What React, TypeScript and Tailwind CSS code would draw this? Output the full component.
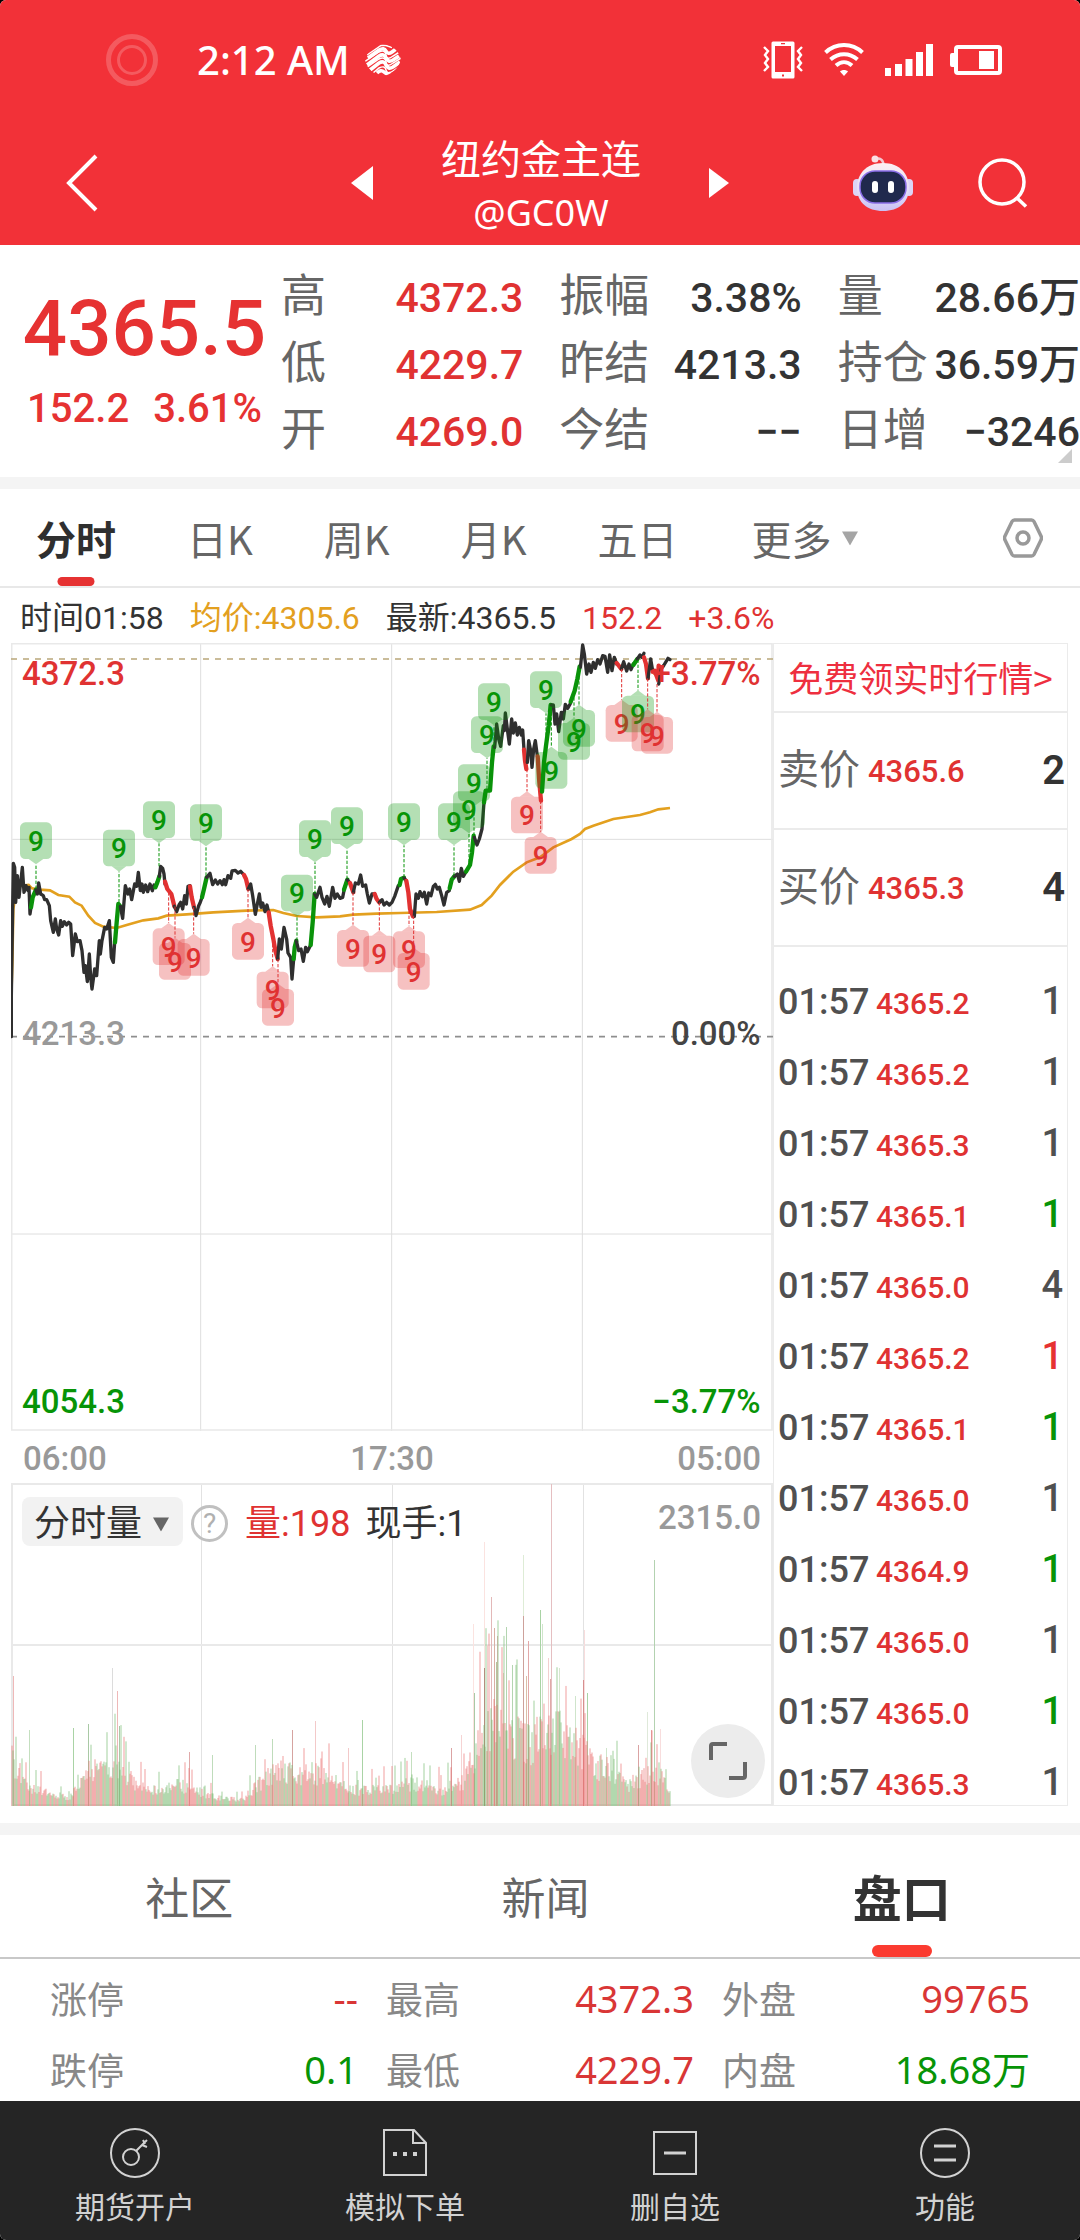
import type { ReactNode } from 'react';

const NUM = "font-['Roboto','Noto_Sans_CJK_SC',sans-serif]";

type Pt = [number, number];
type Run = { color: 'k' | 'g' | 'r'; pts: Pt[] };

const STROKE = { k: '#2f2f2f', g: '#0a930a', r: '#e23232' };

/* Intraday price, split in runs wherever a nine-count sequence is highlighted */
const PRICE: Run[] = [
  { color: 'k', pts: [[34, 1223], [34, 1100], [37, 900], [40, 703], [44, 715], [47, 820], [52, 740], [57, 805], [62, 760], [67, 715], [72, 790], [78, 770], [84, 785], [87, 775], [90, 855], [93, 835]] },
  { color: 'g', pts: [[93, 835], [98, 805], [108, 782]] },
  { color: 'k', pts: [[108, 782], [112, 795], [116, 762], [122, 795], [130, 800], [134, 812], [140, 812], [148, 830], [152, 875], [160, 910], [166, 870], [170, 900], [176, 918], [182, 875], [187, 892], [193, 878], [200, 888], [206, 880], [212, 885], [218, 980], [226, 915], [232, 938], [240, 935], [246, 965], [252, 1030], [256, 1010], [262, 1058], [268, 975], [272, 1045], [276, 1080], [284, 1020], [290, 1040], [298, 935], [301, 975], [306, 935], [314, 895], [320, 900], [328, 875], [334, 985], [340, 1000], [344, 940]] },
  { color: 'g', pts: [[345, 940], [350, 880], [355, 825], [361, 832]] },
  { color: 'k', pts: [[361, 832], [368, 868], [376, 770], [384, 795], [389, 780], [395, 812], [404, 765], [410, 772], [415, 730], [421, 785], [426, 765], [430, 790], [437, 768], [443, 788], [450, 765], [457, 785], [462, 768], [466, 775]] },
  { color: 'g', pts: [[466, 775], [472, 760], [478, 742]] },
  { color: 'k', pts: [[478, 742], [482, 712], [488, 718], [492, 735], [495, 765]] },
  { color: 'r', pts: [[495, 758], [502, 780], [514, 795], [523, 832]] },
  { color: 'k', pts: [[523, 832], [530, 848], [537, 828], [542, 820], [548, 840], [554, 800], [559, 825], [564, 772], [570, 770]] },
  { color: 'r', pts: [[570, 772], [575, 805], [582, 835]] },
  { color: 'k', pts: [[582, 835], [588, 860], [596, 830], [600, 822], [606, 805]] },
  { color: 'g', pts: [[606, 805], [612, 780], [620, 745]] },
  { color: 'k', pts: [[620, 745], [630, 733], [638, 767], [646, 753], [653, 765], [660, 755], [667, 767], [672, 752], [677, 767], [684, 740], [692, 748], [696, 726], [706, 724], [714, 732], [722, 727], [732, 738]] },
  { color: 'r', pts: [[732, 738], [738, 750], [745, 780]] },
  { color: 'k', pts: [[745, 780], [752, 765], [758, 800], [766, 856], [772, 825], [778, 795], [783, 835], [788, 822], [795, 848], [801, 828], [806, 850]] },
  { color: 'r', pts: [[806, 850], [812, 890], [820, 930], [826, 965], [833, 990]] },
  { color: 'k', pts: [[833, 990], [838, 930], [844, 960], [852, 895], [860, 930], [864, 972], [872, 985], [876, 1050], [881, 990]] },
  { color: 'g', pts: [[881, 990], [884, 955], [889, 935]] },
  { color: 'k', pts: [[889, 935], [896, 965], [903, 960], [910, 997], [917, 955], [922, 968], [932, 948]] },
  { color: 'g', pts: [[932, 948], [938, 880], [944, 795]] },
  { color: 'k', pts: [[944, 795], [950, 805], [960, 775], [966, 805], [974, 825], [981, 802], [988, 832], [998, 775], [1005, 808], [1012, 795], [1020, 808], [1028, 805], [1032, 785]] },
  { color: 'g', pts: [[1032, 782], [1042, 752]] },
  { color: 'k', pts: [[1042, 752], [1050, 762]] },
  { color: 'r', pts: [[1050, 762], [1060, 790]] },
  { color: 'k', pts: [[1060, 790], [1066, 762], [1075, 765], [1082, 738], [1088, 772], [1097, 768], [1102, 795], [1108, 822], [1116, 795], [1124, 795]] },
  { color: 'r', pts: [[1124, 795], [1130, 810], [1138, 820]] },
  { color: 'k', pts: [[1138, 820], [1146, 812], [1152, 828], [1160, 820], [1168, 828], [1176, 820], [1184, 802], [1195, 770]] },
  { color: 'g', pts: [[1199, 768], [1203, 750], [1212, 746]] },
  { color: 'k', pts: [[1212, 746], [1219, 756]] },
  { color: 'r', pts: [[1219, 756], [1225, 790], [1230, 840], [1239, 862]] },
  { color: 'k', pts: [[1243, 862], [1248, 795], [1255, 808], [1260, 788], [1267, 803], [1273, 790], [1280, 825], [1286, 792], [1293, 800], [1300, 772], [1306, 766], [1312, 780], [1318, 775], [1325, 800], [1332, 828], [1340, 790], [1348, 785]] },
  { color: 'g', pts: [[1349, 778], [1355, 752], [1363, 742]] },
  { color: 'k', pts: [[1363, 742], [1372, 735], [1378, 757], [1384, 718], [1390, 742], [1398, 728]] },
  { color: 'g', pts: [[1398, 728], [1410, 708], [1416, 670], [1421, 620]] },
  { color: 'k', pts: [[1423, 625], [1431, 648], [1438, 630], [1446, 600], [1452, 520]] },
  { color: 'g', pts: [[1452, 520], [1457, 485], [1470, 485], [1476, 400], [1481, 352]] },
  { color: 'k', pts: [[1484, 355], [1490, 285], [1496, 330], [1502, 352], [1510, 290], [1513, 305], [1516, 252], [1522, 300], [1528, 345], [1535, 270], [1540, 312], [1546, 282], [1552, 318], [1558, 295], [1564, 318], [1568, 303], [1572, 362]] },
  { color: 'r', pts: [[1572, 362], [1575, 395], [1579, 420]] },
  { color: 'k', pts: [[1582, 400], [1586, 335], [1592, 365], [1596, 415], [1601, 360], [1606, 335], [1612, 382]] },
  { color: 'r', pts: [[1613, 382], [1618, 460], [1623, 515]] },
  { color: 'g', pts: [[1626, 488], [1632, 400], [1638, 350], [1646, 290], [1652, 228]] },
  { color: 'k', pts: [[1654, 228], [1660, 228], [1665, 285], [1670, 255], [1676, 308], [1684, 250], [1690, 270], [1696, 226], [1703, 238], [1712, 222]] },
  { color: 'g', pts: [[1712, 218], [1724, 185], [1732, 150], [1739, 112]] },
  { color: 'k', pts: [[1741, 115], [1745, 80], [1748, 48], [1753, 75], [1760, 135], [1767, 105], [1773, 130], [1780, 100], [1786, 118], [1793, 92], [1800, 105], [1808, 80], [1815, 82], [1823, 130], [1829, 78], [1836, 125], [1843, 85], [1850, 105]] },
  { color: 'r', pts: [[1850, 102], [1864, 120]] },
  { color: 'k', pts: [[1864, 120], [1871, 98], [1880, 126], [1887, 105], [1893, 122], [1900, 105]] },
  { color: 'g', pts: [[1900, 108], [1912, 90]] },
  { color: 'k', pts: [[1912, 90], [1920, 78], [1926, 85], [1932, 73]] },
  { color: 'r', pts: [[1932, 85], [1938, 105], [1944, 148]] },
  { color: 'k', pts: [[1944, 148], [1952, 90], [1958, 125]] },
  { color: 'r', pts: [[1958, 128], [1964, 125], [1974, 152], [1976, 110]] },
  { color: 'k', pts: [[1976, 165], [1984, 120], [1992, 108], [2004, 88], [2010, 92]] },
];

const AVERAGE =
  '34,1100 37,1000 40,840 50,772 86,768 96,778 120,782 150,784 175,798 208,803 225,820 245,830 265,860 285,882 310,893 350,897 380,888 430,874 475,868 500,860 560,856 640,850 740,845 820,843 850,852 890,861 950,865 1020,862 1060,857 1130,854 1200,852 1310,849 1410,842 1445,828 1475,800 1500,768 1540,728 1580,700 1620,685 1660,655 1715,630 1740,615 1755,600 1780,590 1840,570 1920,558 1950,550 1975,541 2010,537';

/* up: the box hangs below the line and its tip points upward */
type Nine = { x: number; top: number; to: number; up?: boolean; red?: boolean };

const NINES: Nine[] = [
  { x: 108, top: 580, to: 780 },
  { x: 357, top: 602, to: 820 },
  { x: 477, top: 517, to: 712 },
  { x: 618, top: 526, to: 740 },
  { x: 891, top: 737, to: 935 },
  { x: 945, top: 574, to: 795 },
  { x: 1041, top: 535, to: 750 },
  { x: 1212, top: 523, to: 745 },
  { x: 1362, top: 523, to: 740 },
  { x: 1407, top: 487, to: 700 },
  { x: 1422, top: 406, to: 620 },
  { x: 1461, top: 262, to: 480 },
  { x: 1482, top: 163, to: 350 },
  { x: 1638, top: 127, to: 350 },
  { x: 1654, top: 369, to: 235, up: true },
  { x: 1737, top: 243, to: 112, up: true },
  { x: 1722, top: 282, to: 190, up: true },
  { x: 506, top: 898, to: 790, up: true, red: true },
  { x: 525, top: 942, to: 832, up: true, red: true },
  { x: 581, top: 930, to: 835, up: true, red: true },
  { x: 744, top: 882, to: 780, up: true, red: true },
  { x: 818, top: 1028, to: 930, up: true, red: true },
  { x: 834, top: 1080, to: 990, up: true, red: true },
  { x: 1059, top: 903, to: 790, up: true, red: true },
  { x: 1138, top: 920, to: 820, up: true, red: true },
  { x: 1227, top: 907, to: 800, up: true, red: true },
  { x: 1241, top: 972, to: 860, up: true, red: true },
  { x: 1581, top: 503, to: 420, up: true, red: true },
  { x: 1622, top: 624, to: 515, up: true, red: true },
  { x: 1865, top: 228, to: 120, up: true, red: true },
  { x: 1914, top: 200, to: 92, up: true },
  { x: 1943, top: 257, to: 148, up: true, red: true },
  { x: 1971, top: 264, to: 150, up: true, red: true },
];

function NineTag({ x, top, to, up, red }: Nine) {
  const color = red ? '#e03232' : '#079407';
  const edge = up ? top - 16 : top + 126;
  return (
    <g>
      <line x1={x} x2={x} y1={to} y2={edge} stroke={color} strokeWidth="3" strokeDasharray="10 5" />
      <g fill={color} fillOpacity="0.3">
        <rect x={x - 48} y={top} width="96" height="110" rx="16" />
        {up ? (
          <path d={`M${x - 22} ${top}L${x} ${top - 16}L${x + 22} ${top}z`} />
        ) : (
          <path d={`M${x - 22} ${top + 110}L${x} ${top + 126}L${x + 22} ${top + 110}z`} />
        )}
      </g>
      <text x={x} y={top + 86} textAnchor="middle" fontSize="84" fill={color}>9</text>
    </g>
  );
}

function PriceChart() {
  return (
    <svg viewBox="33 42 2286 2364" className={`block w-full font-medium ${NUM}`} role="img" aria-label="分时">
      <g fill="none" stroke="#dedede" strokeWidth="3">
        <path d="M33 631H2319M33 1815H2319M602 42V2406M1175 42V2406M1747 42V2406" />
        <path d="M35 44H2316V2403H35z" stroke="#e9e9e9" strokeWidth="5" />
      </g>
      <line x1="33" x2="2319" y1="90" y2="90" stroke="#b9a679" strokeWidth="5" strokeDasharray="18 18" />
      <line x1="33" x2="2319" y1="1223" y2="1223" stroke="#8e8e8e" strokeWidth="5" strokeDasharray="18 18" />
      <polyline points={AVERAGE} fill="none" stroke="#e3a01f" strokeWidth="8" />
      {PRICE.map((run, i) => (
        <polyline
          key={i}
          points={run.pts.map((p) => p.join(',')).join(' ')}
          fill="none"
          stroke={STROKE[run.color]}
          strokeWidth={run.color === 'k' ? 10 : 13}
          strokeLinejoin="round"
          strokeLinecap="round"
        />
      ))}
      {NINES.map((n, i) => (
        <NineTag key={i} {...n} />
      ))}
      <g fontSize="99" stroke="none">
        <text x="66" y="169" fill="#e03232">4372.3</text>
        <text x="2282" y="169" fill="#e03232" textAnchor="end">+3.77%</text>
        <text x="66" y="1249" fill="#999">4213.3</text>
        <text x="2282" y="1249" fill="#444" textAnchor="end">0.00%</text>
        <text x="66" y="2352" fill="#079407">4054.3</text>
        <text x="2282" y="2352" fill="#079407" textAnchor="end">−3.77%</text>
      </g>
    </svg>
  );
}

/* Mean volume along the session, linearly interpolated */
const LEVELS: Pt[] = [
  [0, 74], [6, 44], [15, 28], [40, 18], [58, 11], [66, 38], [80, 54], [95, 50], [106, 64], [120, 38], [150, 21], [165, 33],
  [180, 25], [205, 12], [232, 9], [245, 32], [268, 58], [284, 44], [302, 50], [320, 36], [345, 24], [375, 25], [400, 33],
  [430, 24], [452, 36], [464, 84], [478, 124], [500, 104], [520, 88], [534, 126], [550, 102], [568, 90], [580, 60], [600, 56],
  [615, 30], [638, 46], [648, 48], [659, 27],
];

const SPIKES: { x: number; h: number; fill: string }[] = [
  { x: 2, h: 130, fill: '#efb8b8' }, { x: 18, h: 76, fill: '#c4dfbf' }, { x: 62, h: 78, fill: '#a9d3a5' },
  { x: 77, h: 82, fill: '#a9c9a5' }, { x: 101, h: 138, fill: '#dcdcdc' }, { x: 106, h: 115, fill: '#efb8b8' },
  { x: 108, h: 80, fill: '#a9c9a5' }, { x: 178, h: 54, fill: '#e0a9a9' }, { x: 201, h: 51, fill: '#bfdcbb' },
  { x: 244, h: 61, fill: '#bfdcbb' }, { x: 261, h: 67, fill: '#bfdcbb' }, { x: 281, h: 76, fill: '#d6a3a0' },
  { x: 304, h: 85, fill: '#f3c9c9' }, { x: 337, h: 58, fill: '#f3c9c9' }, { x: 351, h: 86, fill: '#a9d3a5' },
  { x: 400, h: 54, fill: '#c4dfbf' }, { x: 440, h: 58, fill: '#dba3a3' }, { x: 450, h: 71, fill: '#f6d3d3' },
  { x: 462, h: 182, fill: '#fbe3e0' }, { x: 463, h: 113, fill: '#a9c9a5' }, { x: 473, h: 264, fill: '#fbe3e0' },
  { x: 473, h: 138, fill: '#b58d7c' }, { x: 476, h: 161, fill: '#f3d0cd' }, { x: 480, h: 209, fill: '#e3b8b8' },
  { x: 483, h: 178, fill: '#d9b0a4' }, { x: 485, h: 144, fill: '#b5c79c' }, { x: 486, h: 170, fill: '#e3b8b8' },
  { x: 492, h: 133, fill: '#f3c9c9' }, { x: 495, h: 179, fill: '#b3d5b0' }, { x: 501, h: 141, fill: '#b3d5b0' },
  { x: 512, h: 251, fill: '#deecd6' }, { x: 512, h: 190, fill: '#cda19b' }, { x: 517, h: 165, fill: '#e3a9a9' },
  { x: 515, h: 130, fill: '#d9bfa8' }, { x: 529, h: 196, fill: '#a9d3a5' }, { x: 531, h: 182, fill: '#cfe5cb' },
  { x: 537, h: 148, fill: '#f3cfcf' }, { x: 539, h: 127, fill: '#e0a9a9' }, { x: 540, h: 322, fill: '#e5bfc1' },
  { x: 548, h: 138, fill: '#d6e6cf' }, { x: 564, h: 110, fill: '#cfe5cb' }, { x: 573, h: 176, fill: '#f8dddd' },
  { x: 572, h: 126, fill: '#d68f8f' }, { x: 576, h: 113, fill: '#a9d3a5' }, { x: 595, h: 58, fill: '#cfe5cb' },
  { x: 627, h: 61, fill: '#dba3a3' }, { x: 636, h: 94, fill: '#dfe9da' }, { x: 640, h: 76, fill: '#e3a9a9' },
  { x: 643, h: 246, fill: '#b3d2b0' }, { x: 649, h: 77, fill: '#f8dddd' },
];

function levelAt(x: number) {
  const i = Math.max(1, LEVELS.findIndex((p) => p[0] >= x));
  const [x0, y0] = LEVELS[i - 1];
  const [x1, y1] = LEVELS[i];
  return y0 + ((y1 - y0) * (x - x0)) / (x1 - x0);
}

function noise(n: number) {
  const v = Math.sin(n * 127.1 + 11.7) * 43758.5453;
  return v - Math.floor(v);
}

const BARS = Array.from({ length: 659 }, (_, x) => {
  const n = noise(x);
  const h = levelAt(x) * (0.42 + 0.56 * n + (n > 0.88 ? noise(x + 900) * 0.7 : 0));
  const red = noise(x + 4000) + Math.sin(x / 9) * 0.18 > 0.48;
  return { x, h, red };
});

function VolumeChart() {
  return (
    <svg viewBox="0 0 762 323" className="block w-full" role="img" aria-label="分时量">
      <g fill="none" stroke="#e2e2e2">
        <path d="M190.500 0V323M381.500 0V323M572.500 0V323" />
        <path d="M1 1H761V322H1zM0 162H762" stroke="#e9e9e9" strokeWidth="2" />
      </g>
      {SPIKES.map((s, i) => (
        <rect key={i} x={s.x} y={323 - s.h} width="1" height={s.h} fill={s.fill} />
      ))}
      {BARS.map((b) => (
        <rect key={b.x} x={b.x} y={323 - b.h} width="2" height={b.h} fill={b.red ? '#e86a6a' : '#6fb96a'} fillOpacity="0.32" />
      ))}
    </svg>
  );
}

function StatusBar() {
  return (
    <div className="flex h-[120px] items-center justify-between pr-[78px] pl-[106px]">
      <div className="flex items-center">
        <svg width="52" height="52" viewBox="0 0 52 52" fill="none" stroke="#fff" strokeOpacity="0.2" aria-hidden="true">
          <circle cx="26" cy="26" r="23.500" strokeWidth="5" />
          <circle cx="26" cy="26" r="13.500" strokeWidth="3" />
        </svg>
        <span className="ml-[39px] font-['Noto_Sans',sans-serif] text-[40px] leading-[52px] font-medium">2:12 AM</span>
        <svg className="ml-[15px]" width="36" height="32" viewBox="0 0 36 32" aria-hidden="true">
          <defs>
            <clipPath id="carrier"><path d="M18 0C28 1 35 8 36 16C33 25 26 31 18 32C9 31 2 25 0 16C2 8 8 1 18 0z" /></clipPath>
          </defs>
          <g clipPath="url(#carrier)" fill="none" stroke="#fff">
            <path strokeWidth="3.600" d="M3 14L14 6q5-3 7 1t6 1l4-3M2 21L14 12q5-3 7 2t7 2l6-4M5 26l9-7q5-3 7 2t7 2l7-5M12 29q4-4 7-1t7 1" />
            <path strokeWidth="1.500" d="M2 11L16 1.500h5l6 2M0 17.500L14 8q6-3 7 3t7 1l8-5M1 24L14 15q6-3 7 3t7 1l8-5M8 29l6-5q6-3 7 2t7 1l6-4" />
          </g>
        </svg>
      </div>
      <div className="flex items-center">
        <svg width="40" height="38" viewBox="0 0 40 38" aria-hidden="true">
          <path fill="#fff" fillRule="evenodd" d="M10 0.500h20a1.500 1.500 0 0 1 1.500 1.500v34a1.500 1.500 0 0 1-1.500 1.500H10a1.500 1.500 0 0 1-1.500-1.500V2A1.500 1.500 0 0 1 10 .5zM12 5v26h16V5zM18 2v1.200h4V2zM19 33.500v2h2v-2z" />
          <path fill="none" stroke="#fff" strokeWidth="2.400" d="M1 6l4 4-3 4 3 4-3 4 3 4-4 4M39 6l-4 4 3 4-3 4 3 4-3 4 4 4" />
        </svg>
        <svg className="ml-[21px]" width="40" height="34" viewBox="0 0 40 34" fill="none" stroke="#fff" strokeWidth="4" aria-hidden="true">
          <path d="M1.500 9.500C12-.5 28-.5 38.500 9.500M6.500 16.500c8-7 19-7 27 0M12 22.500c5-4.500 11-4.500 16 0" />
          <path d="M20 33l-4-4.500c2-2 6-2 8 0z" fill="#fff" stroke="none" />
        </svg>
        <svg className="ml-[21px]" width="48" height="32" viewBox="0 0 48 32" fill="#fff" aria-hidden="true">
          <path d="M0 24h6v8H0zM10 20h7v12h-7zM20.500 15h7v17h-7zM31 8h7v24h-7zM41 0h7v32h-7z" />
        </svg>
        <svg className="ml-[17px]" width="52" height="30" viewBox="0 0 52 30" aria-hidden="true">
          <rect x="6" y="2" width="44" height="26" rx="2" fill="none" stroke="#fff" strokeWidth="4" />
          <path fill="#fff" d="M0 10q0-2 2-2h3v14H2q-2 0-2-2zM29 6h15v18H29z" />
        </svg>
      </div>
    </div>
  );
}

function RobotIcon() {
  return (
    <svg width="60" height="56" viewBox="0 0 60 56" aria-hidden="true">
      <defs>
        <linearGradient id="shell" x1="0" y1="0" x2="0" y2="1">
          <stop offset="0" stopColor="#fdeff2" />
          <stop offset="0.600" stopColor="#e3dcf8" />
          <stop offset="1" stopColor="#c9c0f4" />
        </linearGradient>
      </defs>
      <path d="M22 4q8-2 8.500 6" fill="none" stroke="#f3c6cf" strokeWidth="2.500" />
      <circle cx="22" cy="4" r="3.500" fill="#fbdfe4" />
      <rect x="0" y="24" width="8" height="17" rx="4" fill="#dcd5f6" />
      <rect x="52" y="24" width="8" height="17" rx="4" fill="#dcd5f6" />
      <path d="M30 8c17 0 26 11 26 25S46 56 30 56 4 47 4 33 13 8 30 8z" fill="url(#shell)" />
      <rect x="7" y="16" width="46" height="32" rx="15" fill="#20294d" stroke="#8a6ee8" strokeWidth="1.500" />
      <rect x="19" y="26" width="6" height="12" rx="3" fill="#fff" />
      <rect x="35" y="26" width="6" height="12" rx="3" fill="#fff" />
    </svg>
  );
}

function NavBar() {
  return (
    <nav className="grid h-[125px] grid-cols-[1fr_auto_1fr] items-center px-[52px]">
      <button aria-label="返回" className="justify-self-start pl-[14px]">
        <svg width="32" height="58" viewBox="0 0 32 58" fill="none" stroke="#fff" strokeWidth="4">
          <path d="M30 2L3 29l27 27" />
        </svg>
      </button>
      <div className="flex items-center gap-[68px]">
        <button aria-label="上一个">
          <svg width="22" height="34" viewBox="0 0 22 34" fill="#fff"><path d="M22 0v34L0 17z" /></svg>
        </button>
        <h1 className="flex flex-col pt-1 text-center leading-[56px]">
          <span className="text-[40px]">纽约金主连</span>
          <span className="font-['Noto_Sans',sans-serif] text-[36px]">@GC0W</span>
        </h1>
        <button aria-label="下一个">
          <svg width="20" height="30" viewBox="0 0 20 30" fill="#fff"><path d="M0 0v30l20-15z" /></svg>
        </button>
      </div>
      <div className="flex items-center gap-[65px] justify-self-end">
        <button aria-label="智能助手"><RobotIcon /></button>
        <button aria-label="搜索">
          <svg width="50" height="50" viewBox="0 0 50 50" fill="none" stroke="#fff" strokeWidth="3.500">
            <circle cx="24" cy="24" r="22" />
            <path d="M39 40l9 8.500" />
          </svg>
        </button>
      </div>
    </nav>
  );
}

const STATS = [
  { label: '高', value: '4372.3', tone: 'text-[#e03232]' },
  { label: '振幅', value: '3.38%', tone: 'text-[#333]' },
  { label: '量', value: '28.66万', tone: 'text-[#333]' },
  { label: '低', value: '4229.7', tone: 'text-[#e03232]' },
  { label: '昨结', value: '4213.3', tone: 'text-[#333]' },
  { label: '持仓', value: '36.59万', tone: 'text-[#333]' },
  { label: '开', value: '4269.0', tone: 'text-[#e03232]' },
  { label: '今结', value: '−−', tone: 'text-[#333]' },
  { label: '日增', value: '−3246', tone: 'text-[#333]' },
];

function QuoteSummary() {
  return (
    <section className="relative flex h-[232px] pt-[14px]">
      <div className={`flex w-[281px] shrink-0 flex-col items-center pt-5 pl-2 text-[#e63232] ${NUM}`}>
        <strong className="text-[78px] leading-[100px] font-medium">4365.5</strong>
        <p className="flex gap-[24px] text-[40px] leading-[60px] font-medium">
          <span>152.2</span>
          <span>3.61%</span>
        </p>
      </div>
      <dl className="grid flex-1 auto-rows-[67px] grid-cols-3 gap-x-9">
        {STATS.map((s) => (
          <div key={s.label} className="flex items-baseline justify-between leading-[67px] whitespace-nowrap">
            <dt className="text-[45px] text-[#666]">{s.label}</dt>
            <dd className={`text-[41px] font-medium ${NUM} ${s.tone}`}>{s.value}</dd>
          </div>
        ))}
      </dl>
      <svg className="absolute right-2 bottom-[14px]" width="14" height="14" viewBox="0 0 14 14" fill="#ccc" aria-hidden="true">
        <path d="M14 0v14H0z" />
      </svg>
    </section>
  );
}

function Caret({ className }: { className: string }) {
  return (
    <svg width="16" height="15" viewBox="0 0 16 15" fill="currentColor" className={className} aria-hidden="true">
      <path d="M0 1h16L8 15z" />
    </svg>
  );
}

function PeriodTabs() {
  return (
    <div className="flex h-[99px] items-center border-b-2 border-[#e8e8e8] pr-[37px] pl-9 text-[40px] text-[#666]">
      <button className="relative h-full font-bold text-[#2f2f2f]">
        分时
        <span className="absolute bottom-0 left-1/2 h-[9px] w-[37px] -translate-x-1/2 rounded-full bg-[#e63232]" />
      </button>
      <button className="ml-[71px]">日K</button>
      <button className="ml-[71px]">周K</button>
      <button className="ml-[71px]">月K</button>
      <button className="ml-[71px]">五日</button>
      <div className="relative ml-[74px]">
        <select aria-label="更多周期" className="w-[106px] appearance-none bg-transparent">
          <option>更多</option>
        </select>
        <Caret className="pointer-events-none absolute top-1/2 right-0 -translate-y-1/2 text-[#a5a5a5]" />
      </div>
      <button aria-label="设置" className="ml-auto">
        <svg width="40" height="40" viewBox="0 0 40 40" fill="none" stroke="#999" strokeWidth="3.500">
          <path d="M11.500 2h17a3 3 0 0 1 2.500 1.500l7 14.500q1 2 0 4l-7 14.500a3 3 0 0 1-2.500 1.500h-17a3 3 0 0 1-2.500-1.500l-7-14.500q-1-2 0-4l7-14.500A3 3 0 0 1 11.500 2z" />
          <circle cx="20" cy="20" r="6" />
        </svg>
      </button>
    </div>
  );
}

function InfoLine() {
  return (
    <p className={`flex h-[55px] items-center gap-[26px] pt-1 pl-5 text-[32px] text-[#333] ${NUM}`}>
      <span>时间01:58</span>
      <span className="text-[#e3a01f]">均价:4305.6</span>
      <span>最新:4365.5</span>
      <span className="text-[#e03232]">152.2</span>
      <span className="text-[#e03232]">+3.6%</span>
    </p>
  );
}

function VolumePanel() {
  return (
    <div className="relative">
      <VolumeChart />
      <div className={`absolute top-[10px] right-3 left-[11px] flex items-center text-[36px] text-[#333] ${NUM}`}>
        <div className="relative">
          <select aria-label="副图指标" className="h-[49px] w-[161px] appearance-none rounded-lg bg-[#f2f2f2] pl-3">
            <option>分时量</option>
          </select>
          <Caret className="pointer-events-none absolute top-1/2 right-[14px] -translate-y-1/2 text-[#666]" />
        </div>
        <button aria-label="说明" className="ml-2 flex size-[37px] items-center justify-center rounded-full border-3 border-[#c0c0c0] text-[28px] text-[#b0b0b0]">
          ?
        </button>
        <span className="ml-[17px] text-[#e03232]">量:198</span>
        <span className="ml-[15px]">现手:1</span>
        <span className="ml-auto pb-3 text-[33px] font-medium text-[#999]">2315.0</span>
      </div>
      <button aria-label="全屏" className="absolute right-2 bottom-2 flex size-[74px] items-center justify-center rounded-full bg-[#ececec]">
        <svg width="40" height="40" viewBox="0 0 40 40" fill="none" stroke="#666" strokeWidth="4">
          <path d="M3 19V5q0-2 2-2h14M37 21v14q0 2-2 2H21" />
        </svg>
      </button>
    </div>
  );
}

const TICKS = [
  { price: '4365.2', qty: 1, tone: 'text-[#505050]' },
  { price: '4365.2', qty: 1, tone: 'text-[#505050]' },
  { price: '4365.3', qty: 1, tone: 'text-[#505050]' },
  { price: '4365.1', qty: 1, tone: 'text-[#079407]' },
  { price: '4365.0', qty: 4, tone: 'text-[#505050]' },
  { price: '4365.2', qty: 1, tone: 'text-[#e63232]' },
  { price: '4365.1', qty: 1, tone: 'text-[#079407]' },
  { price: '4365.0', qty: 1, tone: 'text-[#505050]' },
  { price: '4364.9', qty: 1, tone: 'text-[#079407]' },
  { price: '4365.0', qty: 1, tone: 'text-[#505050]' },
  { price: '4365.0', qty: 1, tone: 'text-[#079407]' },
  { price: '4365.3', qty: 1, tone: 'text-[#505050]' },
];

function Quote({ label, price, qty }: { label: string; price: string; qty: number }) {
  return (
    <div className={`flex h-[117px] items-center border-b-2 border-[#ebebeb] pr-[2px] pl-1 ${NUM}`}>
      <span className="text-[41px] text-[#666]">{label}</span>
      <span className="ml-2 pt-1 text-[31px] font-medium text-[#e03232]">{price}</span>
      <span className="ml-auto text-[40px] font-semibold text-[#333]">{qty}</span>
    </div>
  );
}

function OrderPanel() {
  return (
    <aside className="flex w-[295px] shrink-0 flex-col border border-[#ebebeb]">
      <a href="#level2" className="flex h-[69px] items-center justify-center border-b-2 border-[#ebebeb] text-[35px] whitespace-nowrap text-[#ee2f3f]">
        免费领实时行情&gt;
      </a>
      <Quote label="卖价" price="4365.6" qty={2} />
      <Quote label="买价" price="4365.3" qty={4} />
      <div className="h-0 grow overflow-hidden pt-6">
        <table className={`w-full font-medium ${NUM}`}>
          <tbody>
            {TICKS.map((t, i) => (
              <tr key={i} className="h-[71px] align-baseline leading-[60px]">
                <td className="w-[102px] pl-1 text-[36px] text-[#505050]">01:57</td>
                <td className="text-[30px] text-[#e03232]">{t.price}</td>
                <td className={`pr-1 text-right text-[38px] ${t.tone}`}>{t.qty}</td>
              </tr>
            ))}
          </tbody>
        </table>
      </div>
    </aside>
  );
}

function DetailTabs() {
  return (
    <div className="grid h-[124px] grid-cols-3 border-b-2 border-[#c8c8c8] pl-[11px] text-[44px] text-[#666]">
      <button>社区</button>
      <button>新闻</button>
      <button className="relative text-[49px] font-bold text-[#333]">
        盘口
        <span className="absolute bottom-0 left-1/2 h-3 w-[60px] -translate-x-1/2 rounded-full bg-[#fb3b30]" />
      </button>
    </div>
  );
}

const DETAILS = [
  { label: '涨停', value: '--', tone: 'text-[#d93636]' },
  { label: '最高', value: '4372.3', tone: 'text-[#d93636]' },
  { label: '外盘', value: '99765', tone: 'text-[#d93636]' },
  { label: '跌停', value: '0.1', tone: 'text-[#079407]' },
  { label: '最低', value: '4229.7', tone: 'text-[#d93636]' },
  { label: '内盘', value: '18.68万', tone: 'text-[#079407]' },
];

function Action({ label, children }: { label: string; children: ReactNode }) {
  return (
    <button className="flex flex-1 flex-col items-center pt-[26px] text-[30px] leading-[44px] text-[#d2d2d2]">
      <svg width="52" height="52" viewBox="0 0 52 52" fill="none" stroke="currentColor" strokeWidth="2" className="mb-1" aria-hidden="true">
        {children}
      </svg>
      {label}
    </button>
  );
}

export default function App() {
  return (
    <div className="bg-black">
      <main className="overflow-hidden rounded-[6px] bg-white font-['Noto_Sans_CJK_SC',sans-serif]">
        <header className="bg-[#f23138] text-white">
          <StatusBar />
          <NavBar />
        </header>

        <QuoteSummary />
        <div className="h-3 bg-[#f4f4f4]" />
        <PeriodTabs />
        <InfoLine />

        <div className="flex pr-3 pl-[11px]">
          <div className="min-w-0 flex-1">
            <PriceChart />
            <div className={`flex h-[52px] items-center justify-between px-3 pt-1 text-[33px] font-medium text-[#999] ${NUM}`}>
              <span>06:00</span>
              <span>17:30</span>
              <span>05:00</span>
            </div>
            <VolumePanel />
          </div>
          <OrderPanel />
        </div>

        <div className="mt-[17px] h-3 bg-[#f4f4f4]" />
        <DetailTabs />
        <dl className="grid h-[142px] auto-rows-[71px] grid-cols-3 gap-x-7 px-[50px] pt-1 text-[37px]">
          {DETAILS.map((d) => (
            <div key={d.label} className="flex items-center justify-between">
              <dt className="text-[#888]">{d.label}</dt>
              <dd className={`font-['Noto_Sans','Noto_Sans_CJK_SC',sans-serif] text-[38px] ${d.tone}`}>{d.value}</dd>
            </div>
          ))}
        </dl>

        <footer className="flex h-[139px] bg-[#252525]">
          <Action label="期货开户">
            <circle cx="26" cy="26" r="24" />
            <circle cx="22" cy="30" r="8" />
            <path d="M27 24L38 13M33 18l5 2M34 13l2 4" />
          </Action>
          <Action label="模拟下单">
            <path d="M5 3h30l12 13v32H5z" />
            <path d="M34 3v13h13" />
            <path d="M14 27h4M24 27h4M34 27h4" strokeWidth="4" />
          </Action>
          <Action label="删自选">
            <rect x="5" y="5" width="42" height="42" />
            <path d="M15 26h22" strokeWidth="3" />
          </Action>
          <Action label="功能">
            <circle cx="26" cy="26" r="24" />
            <path d="M15 19h22M15 33h22" strokeWidth="3" />
          </Action>
        </footer>
      </main>
    </div>
  );
}
